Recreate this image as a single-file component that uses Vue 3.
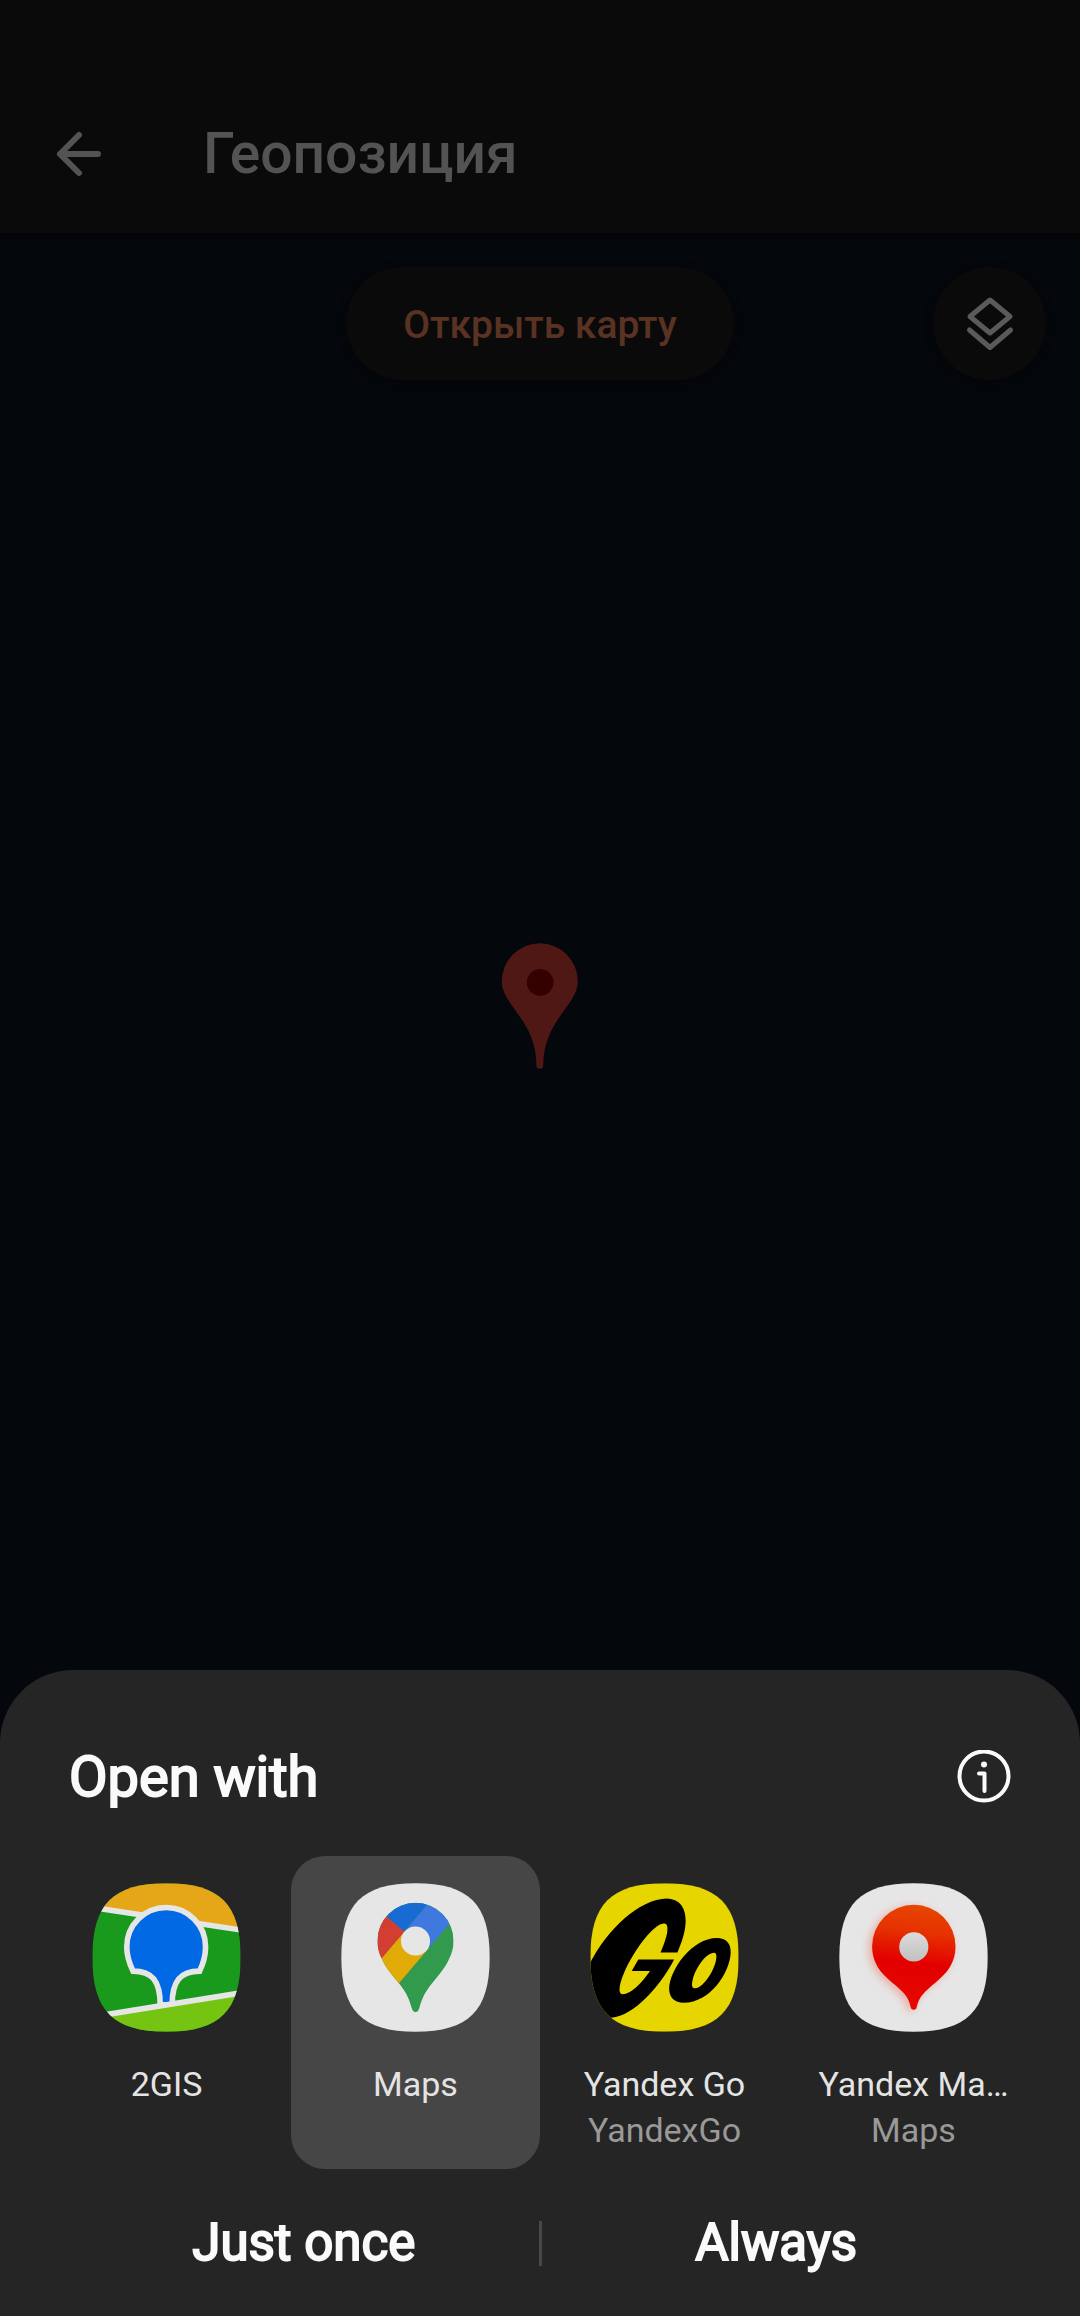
<script setup>
import { ref } from 'vue'

const apps = [
  { id: '2gis', name: '2GIS', note: '', box: '63 69 450 450' },
  { id: 'gmaps', name: 'Maps', note: '', box: '60 69 450 450' },
  { id: 'yago', name: 'Yandex Go', note: 'YandexGo', box: '57 69 450 450' },
  { id: 'yamaps', name: 'Yandex Ma…', note: 'Maps', box: '54 69 450 450' },
]
const selected = ref('gmaps')
const squircle =
  'M0,-224 C161,-224 224,-161 224,0 C224,161 161,224 0,224 C-161,224 -224,161 -224,0 C-224,-161 -161,-224 0,-224 Z'
</script>

<template>
  <div class="screen">
    <header class="topbar">
      <button class="icon-button back" aria-label="Назад">
        <svg width="48" height="48" viewBox="0 0 48 48" fill="none" stroke="#535353" stroke-width="6" stroke-linecap="round" stroke-linejoin="round">
          <path d="M43 24H5M24 5L5 24L24 43" />
        </svg>
      </button>
      <h1>Геопозиция</h1>
    </header>

    <main class="map">
      <div class="map-tools">
        <button class="open-map">Открыть карту</button>
        <button class="layers" aria-label="Слои">
          <svg width="52" height="56" viewBox="0 0 52 56" fill="none" stroke="#5a5a5a" stroke-width="5" stroke-linecap="round" stroke-linejoin="round">
            <path d="M26 4L46 20.500L26 37L6 20.500Z" />
            <path d="M5.500 34L26 51.500L46.500 34" />
          </svg>
        </button>
      </div>
      <svg class="pin" width="77" height="126" viewBox="95 71 231 378">
        <path fill="#501815" d="M210,72 A114,114 0 0 1 324,186 C324,260 221,300 220,440 Q220,448 210,448 Q200,448 200,440 C199,300 96,260 96,186 A114,114 0 0 1 210,72 Z" />
        <circle cx="211" cy="189" r="40" fill="#340000" />
      </svg>
    </main>

    <section class="sheet" aria-labelledby="sheet-title">
      <div class="sheet-head">
        <h2 id="sheet-title">Open with</h2>
        <button class="icon-button" aria-label="Info">
          <svg width="54" height="54" viewBox="0 0 54 54" fill="none" stroke="#fafafa" stroke-width="4" stroke-linecap="round" stroke-linejoin="round">
            <circle cx="27" cy="26" r="24.500" />
            <path d="M22 23.500H27.500V41" />
            <circle cx="27" cy="14.500" r="3" fill="#fafafa" stroke="none" />
          </svg>
        </button>
      </div>

      <div class="apps">
        <button
          v-for="app in apps"
          :key="app.id"
          class="app"
          :class="{ selected: selected === app.id }"
          :aria-pressed="selected === app.id"
          @click="selected = app.id"
        >
          <svg v-if="app.id === '2gis'" class="app-icon" :viewBox="app.box">
            <clipPath id="clip-2gis"><path :d="squircle" transform="translate(288 294)" /></clipPath>
            <g clip-path="url(#clip-2gis)">
              <rect x="60" y="60" width="460" height="460" fill="#1a9a1d" />
              <path d="M60,60H520V212L60,142Z" fill="#e5a617" />
              <path d="M60,142L520,212" stroke="#e6e6e6" stroke-width="17" />
              <path fill="#0069e3" stroke="#e6e6e6" stroke-width="17" d="M187,335 C175,310 168,290 168,262 A119,119 0 0 1 406,262 C406,290 400,310 388,335 C330,335 305,365 305,437 L269,437 C269,365 245,335 187,335 Z" />
              <path d="M60,474L520,400V530H60Z" fill="#76c412" />
              <path d="M60,474L520,400" stroke="#e6e6e6" stroke-width="17" />
            </g>
          </svg>
          <svg v-else-if="app.id === 'gmaps'" class="app-icon" :viewBox="app.box">
            <clipPath id="clip-gmaps">
              <path d="M285,129 A115,115 0 0 1 400,244 C400,265 395,280 387,297 C375,325 355,347 335,372 C315,398 305,415 297,445 Q293,459 285,459 Q277,459 273,445 C265,415 255,398 235,372 C215,347 195,325 183,297 C175,280 170,265 170,244 A115,115 0 0 1 285,129 Z" />
            </clipPath>
            <path :d="squircle" transform="translate(285 294)" fill="#e6e6e6" />
            <g clip-path="url(#clip-gmaps)">
              <rect x="160" y="120" width="250" height="350" fill="#319a4c" />
              <path fill="#3f78de" d="M285,313L420,153V100H350L250,218Z" />
              <path fill="#176bd3" d="M350,100L250,216L150,130V100Z" />
              <path fill="#d43d32" d="M150,130L252,216L150,336Z" />
              <path fill="#e2aa06" d="M150,336L250,218L325,266L235,372L150,473Z" />
            </g>
            <circle cx="285" cy="244" r="44" fill="#e6e6e6" />
          </svg>
          <svg v-else-if="app.id === 'yago'" class="app-icon" :viewBox="app.box">
            <clipPath id="clip-yago"><path :d="squircle" transform="translate(282 294)" /></clipPath>
            <g clip-path="url(#clip-yago)">
              <rect x="50" y="60" width="470" height="470" fill="#e7d500" />
              <path d="M50,325 C100,220 200,118 290,116 C330,118 346,145 346,185 C345,220 332,252 321,279 L270,279 C282,250 291,225 291,207 C291,196 288,191 279,191 C250,193 190,270 160,340 C145,375 140,405 156,405 C180,405 215,370 238,335 L183,335 L203,300 L311,300 C270,380 190,470 122,476 L50,476 Z" />
              <path fill-rule="evenodd" d="M440,235 C468,235 482,250 482,278 C480,340 420,430 340,431 C312,431 296,415 296,388 C298,330 365,235 440,235 Z M432,280 C408,280 376,325 367,362 C364,375 364,386 372,387 C398,387 428,340 437,305 C440,292 440,280 432,280 Z" />
            </g>
          </svg>
          <svg v-else class="app-icon" :viewBox="app.box">
            <defs>
              <linearGradient id="ya-red" x1="0.550" y1="0" x2="0.450" y2="1">
                <stop offset="0" stop-color="#e64600" />
                <stop offset="0.250" stop-color="#e63200" />
                <stop offset="0.550" stop-color="#e20000" />
                <stop offset="1" stop-color="#e60800" />
              </linearGradient>
              <linearGradient id="ya-hole" x1="0" y1="0" x2="0" y2="1">
                <stop offset="0" stop-color="#dcdcdc" />
                <stop offset="1" stop-color="#c0c0c0" />
              </linearGradient>
              <filter id="ya-blur" x="-20%" y="-20%" width="140%" height="140%"><feGaussianBlur stdDeviation="13" /></filter>
              <path id="ya-pin" d="M280,135 A126,126 0 0 1 406,261 C406,310 380,342 345,370 C310,398 295,415 289,442 Q288,452 280,452 Q271,452 270,442 C265,415 250,398 215,370 C180,342 154,310 154,261 A126,126 0 0 1 280,135 Z" />
            </defs>
            <path :d="squircle" transform="translate(279 294)" fill="#e6e6e6" />
            <use href="#ya-pin" x="-10" y="6" fill="#f04020" opacity="0.350" filter="url(#ya-blur)" />
            <use href="#ya-pin" fill="url(#ya-red)" />
            <circle cx="280" cy="262" r="44" fill="url(#ya-hole)" />
          </svg>
          <span class="app-name">{{ app.name }}</span>
          <span v-if="app.note" class="app-note">{{ app.note }}</span>
        </button>
      </div>

      <div class="actions">
        <button>Just once</button>
        <span class="divider"></span>
        <button>Always</button>
      </div>
    </section>
  </div>
</template>

<style>
body {
  margin: 0;
  background: #04070c;
}
</style>

<style scoped>
.screen {
  display: flex;
  flex-direction: column;
  min-height: 100vh;
  background: #04070c;
  font-family: Roboto, "Noto Sans", sans-serif;
}
button {
  margin: 0;
  padding: 0;
  border: 0;
  background: none;
  font: inherit;
  color: inherit;
  cursor: pointer;
}
h1,
h2 {
  margin: 0;
}
svg {
  display: block;
}
.topbar {
  display: flex;
  align-items: center;
  gap: 100px;
  box-sizing: border-box;
  height: 233px;
  padding: 75px 55px 0;
  background: #0a0a0a;
  box-shadow: 0 2px 8px #050505;
}
h1 {
  font-size: 57px;
  line-height: 64px;
  font-weight: 500;
  color: #535353;
}
.map {
  position: relative;
  flex: 1;
}
.map-tools {
  display: grid;
  grid-template-columns: 1fr auto 1fr;
  padding: 34px;
}
.open-map,
.layers {
  height: 113px;
  border-radius: 57px;
  background: #0a0a0a;
  box-shadow: 0 2px 8px #050508;
}
.open-map {
  grid-column: 2;
  padding: 3px 57px 0;
  font-size: 39px;
  font-weight: 500;
  color: #5a3224;
}
.layers {
  display: grid;
  place-items: center;
  justify-self: end;
  width: 113px;
}
.pin {
  position: absolute;
  left: 50%;
  top: 58.2%;
  transform: translate(-50%, -100%);
}
.sheet {
  padding: 69px 42px 25px;
  border-radius: 73px 73px 0 0;
  background: #252525;
  color: #fafafa;
}
.sheet-head {
  display: flex;
  align-items: center;
  justify-content: space-between;
  padding: 0 27px;
}
h2 {
  font-size: 56px;
  line-height: 76px;
  font-weight: 400;
  -webkit-text-stroke: 2px currentColor;
}
.apps {
  display: grid;
  grid-template-columns: repeat(4, 1fr);
  margin-top: 41px;
}
.app {
  display: flex;
  flex-direction: column;
  align-items: center;
  box-sizing: border-box;
  height: 313px;
  min-width: 0;
  padding: 27px 16px 0;
  border-radius: 34px;
  font-size: 34px;
  line-height: 46px;
  color: #e4e4e4;
}
.app.selected {
  background: #464646;
}
.app-icon {
  flex: none;
  width: 149px;
  height: 149px;
  margin-bottom: 29px;
}
.app-name {
  max-width: 100%;
  white-space: nowrap;
}
.app-note {
  color: #999;
}
.actions {
  display: flex;
  align-items: center;
  margin-top: 26px;
  padding: 0 27px;
}
.actions button {
  flex: 1;
  font-size: 51px;
  line-height: 96px;
  -webkit-text-stroke: 2px currentColor;
}
.divider {
  width: 3px;
  height: 45px;
  background: #484848;
}
</style>
